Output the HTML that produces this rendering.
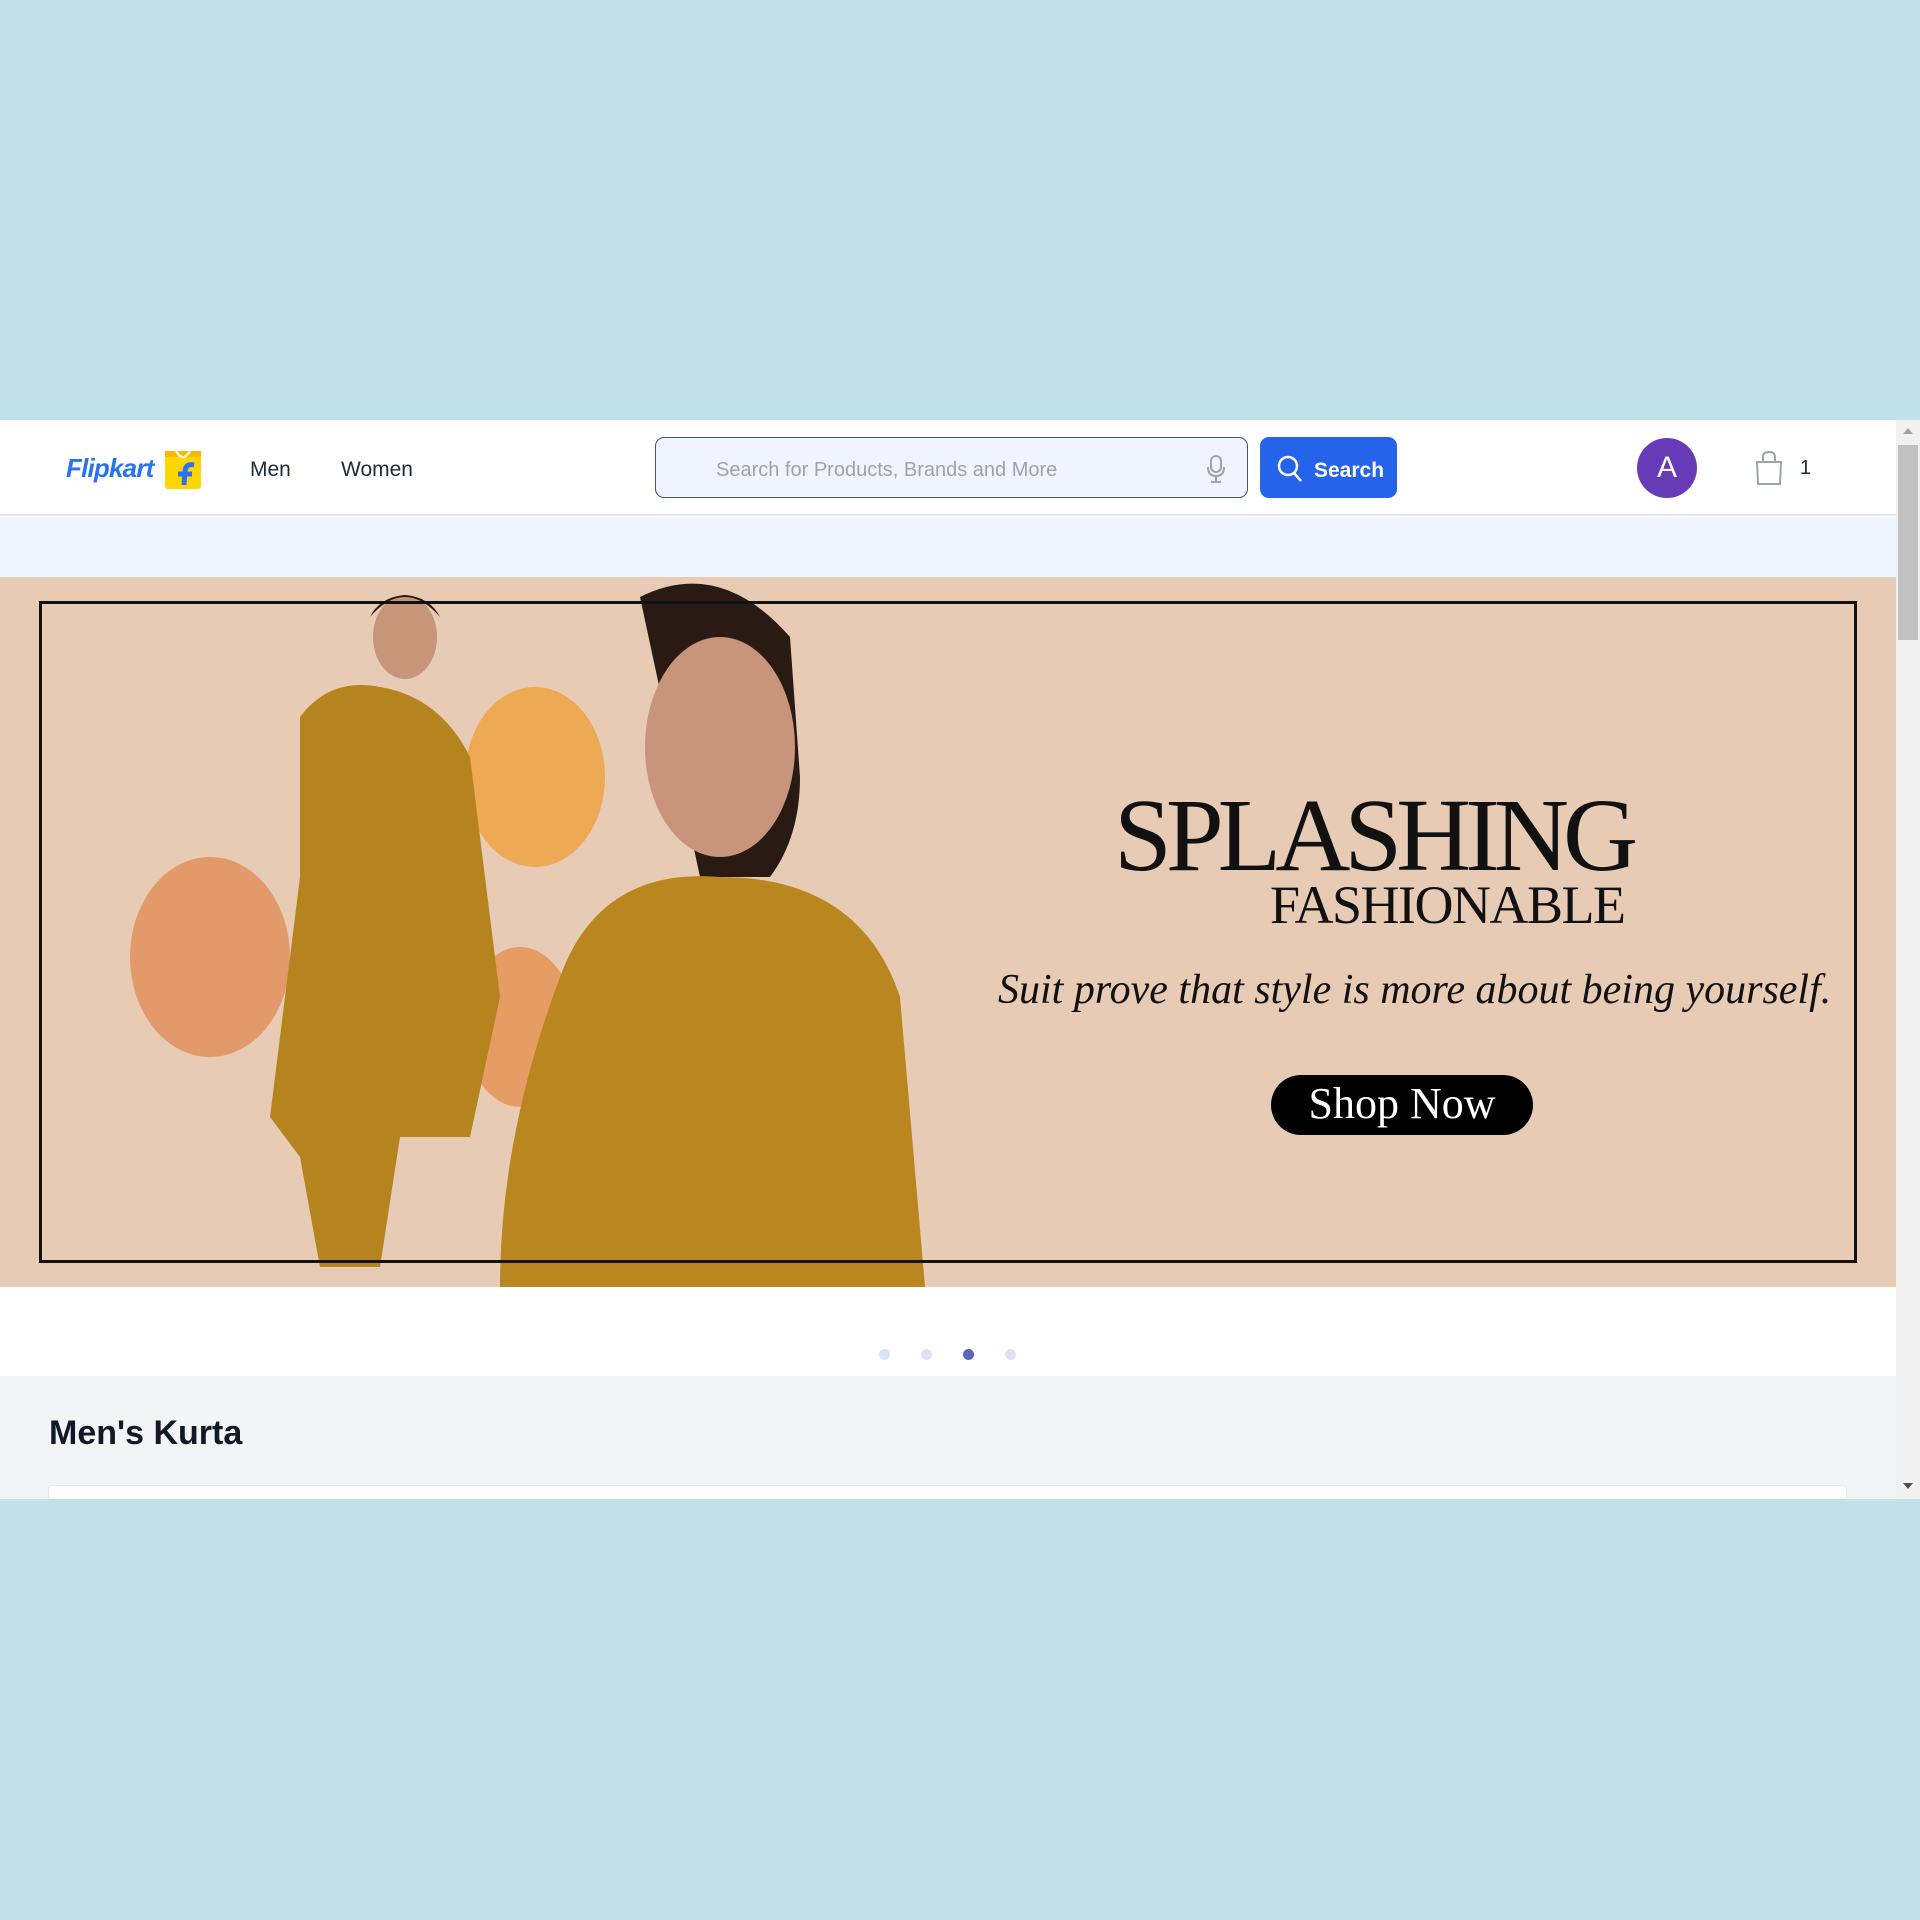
<!DOCTYPE html>
<html><head><meta charset="utf-8"><style>
*{margin:0;padding:0;box-sizing:border-box}
body{width:1920px;height:1920px;background:#c0e2e8;font-family:"Liberation Sans",sans-serif;position:relative;overflow:hidden}
.a{position:absolute}
</style></head><body>
<div class="a" style="left:0;top:420px;width:1896px;height:1079px;background:#fff;overflow:hidden">
 <div class="a" style="left:0;top:0;width:1896px;height:96px;background:#fff;border-bottom:2px solid #e5e7eb"></div>
 <div class="a" style="left:66px;top:33px;font-size:26px;font-weight:bold;font-style:italic;color:#2874f0;letter-spacing:-0.8px">Flipkart</div>
 <svg class="a" style="left:164px;top:27px" width="38" height="42" viewBox="0 0 38 42"><rect x="1" y="4" width="36" height="38" rx="3" fill="#ffd600"/><rect x="1" y="4" width="36" height="6" fill="#f9b800"/><path d="M12 4 Q19 16 26 4" stroke="#fff" stroke-width="2" fill="none"/><path d="M30 18 Q22 16 21 24 L20 38 M14 27 L28 27" stroke="#2874f0" stroke-width="5" fill="none"/></svg>
 <div class="a" style="left:250px;top:38px;font-size:21px;color:#1f2937">Men</div>
 <div class="a" style="left:341px;top:38px;font-size:21px;color:#1f2937">Women</div>
 <div class="a" style="left:655px;top:17px;width:593px;height:61px;background:#eef5ff;border:1.5px solid #4b5563;border-radius:9px"></div>
 <div class="a" style="left:716px;top:39px;font-size:20px;color:#9ca3af">Search for Products, Brands and More</div>
 <svg class="a" style="left:1205px;top:34px" width="22" height="30" viewBox="0 0 22 30"><rect x="6" y="2" width="10" height="16" rx="5" fill="none" stroke="#9ca3af" stroke-width="2"/><path d="M3 13 Q3 22 11 22 Q19 22 19 13 M11 22 V28 M6 28 H16" stroke="#9ca3af" stroke-width="2" fill="none"/></svg>
 <div class="a" style="left:1260px;top:17px;width:137px;height:61px;background:#2563eb;border-radius:9px"></div>
 <svg class="a" style="left:1276px;top:34px" width="28" height="30" viewBox="0 0 28 30"><circle cx="12" cy="12" r="9" fill="none" stroke="#fff" stroke-width="2.5"/><path d="M18 19 L25 27" stroke="#fff" stroke-width="2.5"/></svg>
 <div class="a" style="left:1314px;top:39px;font-size:21px;font-weight:bold;color:#fff">Search</div>
 <div class="a" style="left:1637px;top:18px;width:60px;height:60px;border-radius:50%;background:#673ab7;color:#fff;font-size:30px;text-align:center;line-height:60px">A</div>
 <svg class="a" style="left:1754px;top:30px" width="30" height="36" viewBox="0 0 30 36"><path d="M3 12 H27 L26 34 H4 Z M9 12 V7 Q9 2 15 2 Q21 2 21 7 V12" fill="none" stroke="#9ca3af" stroke-width="2"/></svg>
 <div class="a" style="left:1800px;top:37px;font-size:20px;color:#1f2937">1</div>
 <div class="a" style="left:0;top:97px;width:1896px;height:60px;background:#eef5ff"></div>
 <div class="a" style="left:0;top:157px;width:1896px;height:710px;background:#e7cbb4;overflow:hidden">
  <svg class="a" style="left:0;top:0" width="1000" height="710" viewBox="0 0 1000 710">
   <ellipse cx="210" cy="380" rx="80" ry="100" fill="#e07a3a" opacity="0.6"/>
   <ellipse cx="535" cy="200" rx="70" ry="90" fill="#ef9a2a" opacity="0.7"/>
   <ellipse cx="520" cy="450" rx="55" ry="80" fill="#e67f30" opacity="0.6"/>
   <path d="M300 140 Q330 100 380 110 Q440 120 470 180 L500 420 L470 560 L400 560 L380 690 L320 690 L300 580 L270 540 L300 300 Z" fill="#b5841f"/>
   <ellipse cx="405" cy="60" rx="32" ry="42" fill="#c6957a"/>
   <path d="M370 40 Q405 0 440 40 Q430 20 405 18 Q380 20 370 40Z" fill="#2a1a14"/>
   <path d="M640 20 Q720 -20 790 60 L800 200 Q800 260 770 300 L700 300 Z" fill="#2a1a14"/>
   <ellipse cx="720" cy="170" rx="75" ry="110" fill="#c8957c"/>
   <path d="M560 400 Q600 290 720 300 Q860 300 900 420 L925 710 L500 710 Q500 560 560 400 Z" fill="#b98620"/>
  </svg>
 </div>
 <div class="a" style="left:39px;top:181px;width:1818px;height:662px;border:3px solid #111"></div>
 <div class="a" style="left:1114px;top:364px;font-family:'Liberation Serif',serif;font-size:104px;color:#111;letter-spacing:-6px;line-height:1">SPLASHING</div>
 <div class="a" style="left:1270px;top:458px;font-family:'Liberation Serif',serif;font-size:54px;color:#111;letter-spacing:-1.5px;line-height:1">FASHIONABLE</div>
 <div class="a" style="left:998px;top:546px;width:860px;font-family:'Liberation Serif',serif;font-style:italic;font-size:42px;color:#111;white-space:nowrap">Suit prove that style is more about being yourself.</div>
 <div class="a" style="left:1271px;top:655px;width:262px;height:60px;background:#000;border-radius:30px;color:#fff;font-family:'Liberation Serif',serif;font-size:44px;text-align:center;line-height:58px">Shop Now</div>
 <div class="a" style="left:879px;top:929px;width:11px;height:11px;border-radius:50%;background:#dbe2f5"></div>
 <div class="a" style="left:921px;top:929px;width:11px;height:11px;border-radius:50%;background:#dbe2f5"></div>
 <div class="a" style="left:963px;top:929px;width:11px;height:11px;border-radius:50%;background:#5866b8"></div>
 <div class="a" style="left:1005px;top:929px;width:11px;height:11px;border-radius:50%;background:#dbe2f5"></div>
 <div class="a" style="left:0;top:956px;width:1896px;height:123px;background:#f3f4f6"></div>
 <div class="a" style="left:49px;top:994px;font-size:34px;font-weight:bold;color:#111827">Men's Kurta</div>
 <div class="a" style="left:48px;top:1065px;width:1799px;height:30px;background:#fff;border:1px solid #e5e7eb;border-radius:4px"></div>
</div>
<div class="a" style="left:1896px;top:420px;width:24px;height:1079px;background:#f1f1f1"></div>
<div class="a" style="left:1898px;top:445px;width:20px;height:195px;background:#c1c1c1"></div>
<div class="a" style="left:1903px;top:428px;width:0;height:0;border-left:5px solid transparent;border-right:5px solid transparent;border-bottom:6px solid #a3a3a3"></div>
<div class="a" style="left:1903px;top:1483px;width:0;height:0;border-left:5px solid transparent;border-right:5px solid transparent;border-top:6px solid #505050"></div>
</body></html>
